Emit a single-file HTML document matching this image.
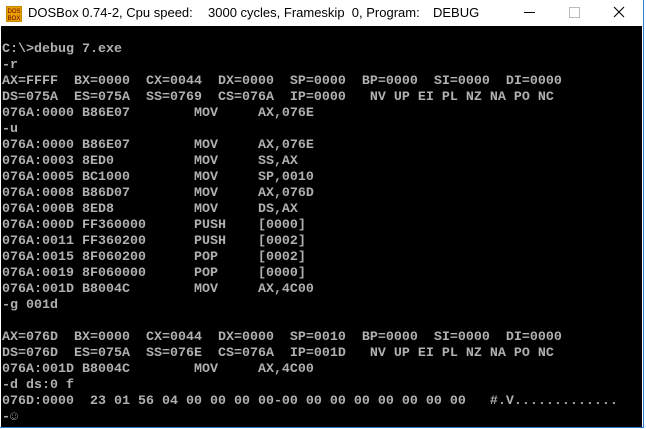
<!DOCTYPE html>
<html><head><meta charset="utf-8"><style>
html,body{margin:0;padding:0;width:646px;height:429px;overflow:hidden;background:#fff}
.win{position:absolute;left:0;top:0;width:643px;height:427px;border-right:1px solid #2b7fd4;border-bottom:1px solid #2b7fd4;background:#fff}
.tb{position:absolute;top:0;left:0;height:26px;width:643px;background:#fff;font-family:"Liberation Sans",sans-serif;font-size:13px;color:#000}
.tb span{position:absolute;top:5px;white-space:pre}
.scr{position:absolute;left:1px;top:26px;width:641px;height:401px;background:#000;overflow:hidden}
pre{margin:0;position:absolute;left:1px;top:16px;font-family:"Liberation Mono",monospace;font-size:13.33px;line-height:16px;color:#b0b0b0;font-weight:bold}
</style></head><body>
<div class="win">
<div class="tb">
<svg style="position:absolute;left:6px;top:6px" width="16" height="16"><rect width="16" height="16" fill="#c88a00"/><rect x="1" y="1" width="14" height="14" fill="#e8a000"/><text x="8" y="7" font-size="6" font-family="Liberation Sans" text-anchor="middle" fill="#600">DOS</text><text x="8" y="14" font-size="6" font-family="Liberation Sans" text-anchor="middle" fill="#600">BOX</text></svg>
<span style="left:28px">DOSBox 0.74-2, Cpu speed:</span>
<span style="left:208px">3000 cycles, Frameskip  0, Program:</span>
<span style="left:433px">DEBUG</span>
<div style="position:absolute;left:524px;top:12px;width:11px;height:1px;background:#000"></div>
<div style="position:absolute;left:569px;top:7px;width:9px;height:9px;border:1px solid #bbb"></div>
<svg style="position:absolute;left:613px;top:6px" width="12" height="12"><path d="M1 1L11 11M11 1L1 11" stroke="#000" stroke-width="1.1"/></svg>
</div>
<div class="scr"><pre>C:\>debug 7.exe
-r
AX=FFFF  BX=0000  CX=0044  DX=0000  SP=0000  BP=0000  SI=0000  DI=0000
DS=075A  ES=075A  SS=0769  CS=076A  IP=0000   NV UP EI PL NZ NA PO NC
076A:0000 B86E07        MOV     AX,076E
-u
076A:0000 B86E07        MOV     AX,076E
076A:0003 8ED0          MOV     SS,AX
076A:0005 BC1000        MOV     SP,0010
076A:0008 B86D07        MOV     AX,076D
076A:000B 8ED8          MOV     DS,AX
076A:000D FF360000      PUSH    [0000]
076A:0011 FF360200      PUSH    [0002]
076A:0015 8F060200      POP     [0002]
076A:0019 8F060000      POP     [0000]
076A:001D B8004C        MOV     AX,4C00
-g 001d

AX=076D  BX=0000  CX=0044  DX=0000  SP=0010  BP=0000  SI=0000  DI=0000
DS=076D  ES=075A  SS=076E  CS=076A  IP=001D   NV UP EI PL NZ NA PO NC
076A:001D B8004C        MOV     AX,4C00
-d ds:0 f
076D:0000  23 01 56 04 00 00 00 00-00 00 00 00 00 00 00 00   #.V.............
-&#9786;</pre></div>
</div>
</body></html>
